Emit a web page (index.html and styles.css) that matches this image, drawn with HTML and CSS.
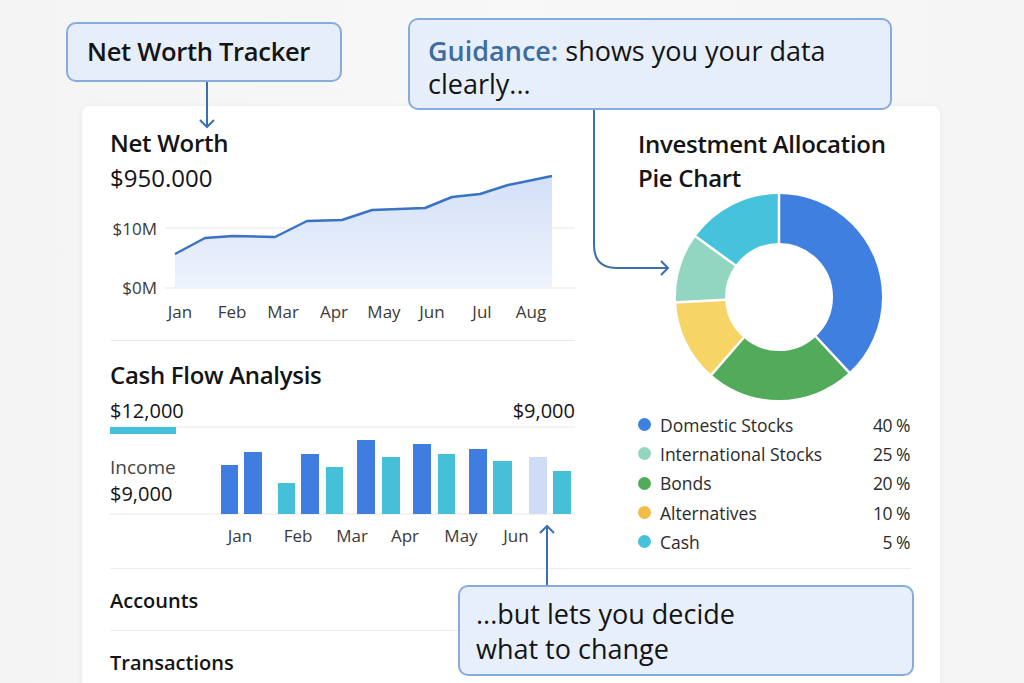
FILE: index.html
```html
<!DOCTYPE html>
<html lang="en">
<head>
    <meta charset="UTF-8">
    <meta name="viewport" content="width=device-width, initial-scale=1.0">
    <title>Net Worth Tracker</title>
    <link rel="stylesheet" href="styles.css">
</head>
<body>
    <div class="stage">
        <div class="card">
            <div class="panels">
                <div class="left">
                    <section class="net-worth">
                        <h2 class="title">Net Worth</h2>
                        <div class="amount">$950.000</div>
                        <svg class="line-chart" width="465" height="160" viewBox="0 0 465 160">
                            <defs>
                                <linearGradient id="area" x1="0" y1="0" x2="0" y2="1">
                                    <stop offset="0" stop-color="#d3e0f7"/>
                                    <stop offset="1" stop-color="#eef3fc"/>
                                </linearGradient>
                            </defs>
                            <line class="grid" x1="55" y1="59" x2="465" y2="59"/>
                            <line class="grid" x1="55" y1="119" x2="465" y2="119"/>
                            <path fill="url(#area)" d="M65 119 L65 85 L95 69 L123 67 L165 68 L197 52 L232 51 L262 41 L315 39 L342 28 L370 25 L398 16 L413 13 L442 7 L442 119 Z"/>
                            <polyline class="trend" points="65,85 95,69 123,67 165,68 197,52 232,51 262,41 315,39 342,28 370,25 398,16 413,13 442,7"/>
                            <text class="axis" x="47" y="66" text-anchor="end">$10M</text>
                            <text class="axis" x="47" y="125" text-anchor="end">$0M</text>
                            <g class="axis" text-anchor="middle">
                                <text x="70" y="149">Jan</text>
                                <text x="122" y="149">Feb</text>
                                <text x="173" y="149">Mar</text>
                                <text x="224" y="149">Apr</text>
                                <text x="274" y="149">May</text>
                                <text x="322" y="149">Jun</text>
                                <text x="372" y="149">Jul</text>
                                <text x="421" y="149">Aug</text>
                            </g>
                        </svg>
                    </section>
                    <section class="cash-flow">
                        <h2 class="title">Cash Flow Analysis</h2>
                        <svg class="bar-chart" width="465" height="155" viewBox="0 0 465 155">
                            <text class="figure" x="0" y="23">$12,000</text>
                            <text class="figure" x="465" y="23" text-anchor="end">$9,000</text>
                            <line class="grid" x1="0" y1="32" x2="465" y2="32"/>
                            <rect x="0" y="32" width="66" height="7" fill="#45c0d8"/>
                            <text class="label" x="0" y="79">Income</text>
                            <text class="figure" x="0" y="106">$9,000</text>
                            <line class="grid" x1="0" y1="119" x2="465" y2="119"/>
                            <g class="blue">
                                <rect x="111" y="70" width="17" height="49"/>
                                <rect x="134" y="57" width="18" height="62"/>
                                <rect x="191" y="59" width="18" height="60"/>
                                <rect x="247" y="45" width="18" height="74"/>
                                <rect x="303" y="49" width="18" height="70"/>
                                <rect x="359" y="54" width="18" height="65"/>
                            </g>
                            <g class="cyan">
                                <rect x="168" y="88" width="17" height="31"/>
                                <rect x="216" y="72" width="17" height="47"/>
                                <rect x="272" y="62" width="18" height="57"/>
                                <rect x="328" y="59" width="17" height="60"/>
                                <rect x="383" y="66" width="19" height="53"/>
                                <rect x="443" y="76" width="18" height="43"/>
                            </g>
                            <rect x="419" y="62" width="18" height="57" fill="#cfdcf5"/>
                            <g class="axis" text-anchor="middle">
                                <text x="130" y="147">Jan</text>
                                <text x="188" y="147">Feb</text>
                                <text x="242" y="147">Mar</text>
                                <text x="295" y="147">Apr</text>
                                <text x="351" y="147">May</text>
                                <text x="406" y="147">Jun</text>
                            </g>
                        </svg>
                    </section>
                </div>
                <div class="right">
                    <h2 class="title">Investment Allocation<br>Pie Chart</h2>
                    <svg class="donut" width="206" height="206" viewBox="0 0 206 206">
                        <g fill="none" stroke-width="49" transform="rotate(-90 103 103)">
                            <circle cx="103" cy="103" r="78.5" stroke="#3f7fe0" stroke-dasharray="187.7 493.2"/>
                            <circle cx="103" cy="103" r="78.5" stroke="#52ab5a" stroke-dasharray="115.1 493.2" stroke-dashoffset="-187.7"/>
                            <circle cx="103" cy="103" r="78.5" stroke="#f7d466" stroke-dasharray="63 493.2" stroke-dashoffset="-302.8"/>
                            <circle cx="103" cy="103" r="78.5" stroke="#92d6c1" stroke-dasharray="53.4 493.2" stroke-dashoffset="-365.8"/>
                            <circle cx="103" cy="103" r="78.5" stroke="#47c2dc" stroke-dasharray="74 493.2" stroke-dashoffset="-419.2"/>
                        </g>
                        <g stroke="#fff" stroke-width="2.5">
                            <line x1="103" y1="52" x2="103" y2="-2"/>
                            <line x1="139.8" y1="142.5" x2="174.5" y2="179.8"/>
                            <line x1="67.6" y1="143.8" x2="34" y2="182.4"/>
                            <line x1="49.1" y1="105.8" x2="-2" y2="108.5"/>
                            <line x1="59.3" y1="71.3" x2="18" y2="41.2"/>
                        </g>
                    </svg>
                    <ul class="legend">
                        <li><span class="dot" style="background:#3f7fe0"></span><span class="name">Domestic Stocks</span><span class="pct">40 %</span></li>
                        <li><span class="dot" style="background:#93d6c0"></span><span class="name">International Stocks</span><span class="pct">25 %</span></li>
                        <li><span class="dot" style="background:#52ab5a"></span><span class="name">Bonds</span><span class="pct">20 %</span></li>
                        <li><span class="dot" style="background:#f0bc4a"></span><span class="name">Alternatives</span><span class="pct">10 %</span></li>
                        <li><span class="dot" style="background:#47c2dc"></span><span class="name">Cash</span><span class="pct">5 %</span></li>
                    </ul>
                </div>
            </div>
            <ul class="nav-list">
                <li>Accounts</li>
                <li>Transactions</li>
            </ul>
        </div>

        <div class="callout tracker">Net Worth Tracker</div>
        <div class="callout guidance"><strong>Guidance:</strong> shows you your data clearly...</div>
        <div class="callout decide">...but lets you decide<br>what to change</div>

        <svg class="connectors" width="1024" height="683" viewBox="0 0 1024 683">
            <path d="M207 82 V127 M200 120 L207 127 L214 120"/>
            <path d="M594 110 V245 Q594 268 617 268 H668 M661 261 L668 268 L661 275"/>
            <path d="M547 585 V526 M540 533 L547 526 L554 533"/>
        </svg>
    </div>
</body>
</html>
```

FILE: styles.css
```css
*{
   margin: 0;
   padding: 0;
   box-sizing: border-box;
}

body{
   font-family: "Open Sans", "Noto Sans", sans-serif;
   color: #141414;
   background: linear-gradient(90deg, #f4f4f5, #f8f8f8 50%, #f5f5f6);
   overflow: hidden;
}

.stage{
   position: relative;
   width: 1024px;
   height: 683px;
   padding: 106px 0 0 82px;
   overflow: hidden;
}

.card{
   width: 858px;
   height: 620px;
   background-color: white;
   border-radius: 8px;
   box-shadow: 0 1px 6px rgba(0, 0, 0, 0.06);
   padding: 0 29px 0 28px;
}

.panels{
   display: grid;
   grid-template-columns: 465px 273px;
   column-gap: 63px;
   height: 462px;
}

.title{
   font-size: 24px;
   font-weight: 600;
   line-height: 34px;
   letter-spacing: -0.3px;
}

.net-worth{
   padding-top: 20px;
   border-bottom: 1px solid #ececec;
   height: 235px;
}

.amount{
   font-size: 24px;
   font-weight: 500;
   line-height: 36px;
}

.line-chart{
   display: block;
   margin-top: -27px;
}

.grid{
   stroke: #e8e8e8;
   stroke-width: 1;
}

.trend{
   fill: none;
   stroke: #3a72c4;
   stroke-width: 2.5;
   stroke-linejoin: round;
}

.axis{
   font-size: 17px;
   fill: #3a3a3a;
}

.cash-flow{
   padding-top: 17px;
}

.bar-chart{
   display: block;
   margin-top: 3px;
}

.figure{
   font-size: 20px;
   fill: #141414;
}

.label{
   font-size: 19px;
   fill: #444;
}

.blue rect{
   fill: #3f7ee0;
}

.cyan rect{
   fill: #45c0d8;
}

.right{
   padding-top: 21px;
}

.donut{
   display: block;
   margin: -1px 0 0 38px;
   overflow: visible;
}

.legend{
   list-style: none;
   margin-top: 10px;
}

.legend li{
   display: flex;
   align-items: center;
   height: 29.3px;
   font-size: 17.5px;
   color: #2b2b2b;
}

.dot{
   width: 13px;
   height: 13px;
   border-radius: 50%;
   margin: 0 9px 0 0;
}

.name{
   flex: 1;
}

.pct{
   margin-right: 1px;
   letter-spacing: -0.5px;
}

.nav-list{
   list-style: none;
}

.nav-list li{
   height: 62px;
   display: flex;
   align-items: center;
   border-top: 1px solid #ececec;
   font-size: 20px;
   font-weight: 600;
   padding-top: 2px;
}

.callout{
   position: absolute;
   background-color: rgba(228, 237, 250, 0.88);
   border: 2px solid #86acdc;
   border-radius: 10px;
   color: #141414;
}

.tracker{
   left: 66px;
   top: 22px;
   width: 276px;
   height: 60px;
   padding: 10px 0 0 19px;
   font-size: 25.5px;
   font-weight: 600;
   line-height: 34px;
   letter-spacing: -0.3px;
}

.guidance{
   left: 408px;
   top: 18px;
   width: 484px;
   height: 92px;
   padding: 14px 20px 0 18px;
   font-size: 27px;
   line-height: 33px;
}

.guidance strong{
   color: #3d6c9e;
   font-weight: 600;
}

.decide{
   left: 458px;
   top: 585px;
   width: 456px;
   height: 91px;
   padding: 9px 0 0 16px;
   font-size: 27px;
   line-height: 35px;
}

.connectors{
   position: absolute;
   left: 0;
   top: 0;
   pointer-events: none;
}

.connectors path{
   fill: none;
   stroke: #3b6fae;
   stroke-width: 2;
}
```
